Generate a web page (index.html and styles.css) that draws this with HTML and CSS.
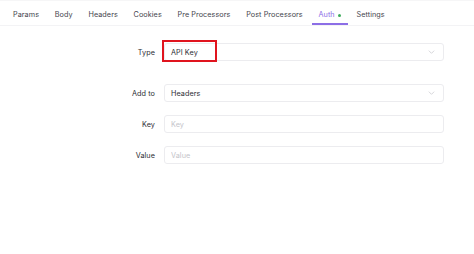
FILE: index.html
```html
<!DOCTYPE html>
<html lang="en">
<head>
    <meta charset="UTF-8">
    <meta name="viewport" content="width=device-width, initial-scale=1.0">
    <title>Auth</title>
    <link rel="stylesheet" href="styles.css">
</head>
<body>

    <nav class="tab-bar">
        <a class="tab">Params</a>
        <a class="tab">Body</a>
        <a class="tab">Headers</a>
        <a class="tab">Cookies</a>
        <a class="tab">Pre Processors</a>
        <a class="tab">Post Processors</a>
        <a class="tab active">Auth <span class="dot"></span></a>
        <a class="tab">Settings</a>
    </nav>

    <form class="auth-form">
        <div class="form-row type-row">
            <label>Type</label>
            <div class="select">
                <span class="select-value">API Key</span>
                <svg class="chevron" viewBox="0 0 10 6" width="7" height="4">
                    <path d="M1 1l4 4 4-4" fill="none" stroke="#c8c8cd" stroke-width="1.1"/>
                </svg>
                <span class="highlight"></span>
            </div>
        </div>
        <div class="form-row">
            <label>Add to</label>
            <div class="select">
                <span class="select-value">Headers</span>
                <svg class="chevron" viewBox="0 0 10 6" width="7" height="4">
                    <path d="M1 1l4 4 4-4" fill="none" stroke="#c8c8cd" stroke-width="1.1"/>
                </svg>
            </div>
        </div>
        <div class="form-row">
            <label for="key">Key</label>
            <input type="text" id="key" placeholder="Key">
        </div>
        <div class="form-row">
            <label for="value">Value</label>
            <input type="text" id="value" placeholder="Value">
        </div>
    </form>

</body>
</html>
```

FILE: styles.css
```css
:root {
    --text-color: #2e2e35;
    --tab-color: #45454d;
    --accent: #8c6ee6;
    --green: #3cab5a;
    --border-color: #ececef;
    --placeholder: #c4c4ca;
}

body {
    margin: 0;
    font-family: 'Inter', 'Liberation Sans', sans-serif;
    font-size: 7.25px;
    letter-spacing: 0.06px;
    color: var(--text-color);
    background: #ffffff;
}

/* Tab bar */
.tab-bar {
    display: flex;
    gap: 1.75px;
    padding: 0 6px;
    border-top: 1px solid #f6f6f7;
    border-bottom: 1px solid #f3f3f5;
}

.tab {
    padding: 9px 7px 3px;
    line-height: 10px;
    color: var(--tab-color);
    border-bottom: 2px solid transparent;
    display: flex;
    align-items: center;
    gap: 3px;
}

.tab.active {
    color: var(--accent);
    border-bottom-color: var(--accent);
}

.dot {
    width: 3px;
    height: 3px;
    border-radius: 50%;
    background: var(--green);
}

/* Form */
.auth-form {
    padding-top: 17px;
    display: flex;
    flex-direction: column;
    gap: 13px;
}

.form-row {
    display: grid;
    grid-template-columns: 155px 280px;
    column-gap: 9px;
    align-items: center;
}

.type-row {
    margin-bottom: 10px;
}

label {
    text-align: right;
    color: var(--text-color);
}

.select,
input[type="text"] {
    position: relative;
    height: 18px;
    box-sizing: border-box;
    border: 1px solid var(--border-color);
    border-radius: 3px;
    padding: 0 6px;
    font-family: inherit;
    font-size: 7.25px;
    letter-spacing: 0.06px;
    color: var(--text-color);
    background: #fff;
    display: flex;
    align-items: center;
    justify-content: space-between;
    width: 100%;
}

input[type="text"]::placeholder {
    color: var(--placeholder);
}

.chevron {
    margin-right: 2px;
}

/* red annotation box around the chosen type */
.highlight {
    position: absolute;
    left: -3px;
    top: -4px;
    width: 55px;
    height: 22px;
    border: 2px solid #e0141e;
    box-sizing: border-box;
}
```
